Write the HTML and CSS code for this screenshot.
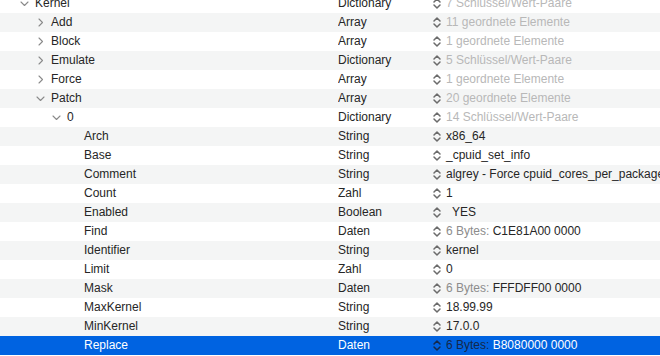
FILE: index.html
```html
<!DOCTYPE html>
<html>
<head>
    <title>Property List</title>
    <meta name="viewport" content="width=device-width, initial-scale=1.0">
    <link rel="stylesheet" href="styles.css">
</head>
<body>
    <svg width="0" height="0" class="defs">
        <defs>
            <symbol id="chev-right" viewBox="0 0 16 19">
                <path d="M6 6 L9.5 9.5 L6 13" fill="none" stroke="currentColor" stroke-width="1.1" stroke-linecap="round" stroke-linejoin="round"/>
            </symbol>
            <symbol id="chev-down" viewBox="0 0 16 19">
                <path d="M4 8 L7.5 11.5 L11 8" fill="none" stroke="currentColor" stroke-width="1.1" stroke-linecap="round" stroke-linejoin="round"/>
            </symbol>
            <symbol id="stepper" viewBox="0 0 16 19">
                <path d="M4 8 L7 5 L10 8 M4 11 L7 14 L10 11" fill="none" stroke="currentColor" stroke-width="1.5" stroke-linecap="round" stroke-linejoin="round"/>
            </symbol>
        </defs>
    </svg>

    <div class="plist">
        <div class="row">
            <div class="key lvl0"><svg class="chev"><use href="#chev-down"/></svg>Kernel</div>
            <div class="type">Dictionary</div>
            <div class="value"><svg class="step"><use href="#stepper"/></svg><span class="muted">7 Schlüssel/Wert-Paare</span></div>
        </div>
        <div class="row">
            <div class="key lvl1"><svg class="chev"><use href="#chev-right"/></svg>Add</div>
            <div class="type">Array</div>
            <div class="value"><svg class="step"><use href="#stepper"/></svg><span class="muted">11 geordnete Elemente</span></div>
        </div>
        <div class="row">
            <div class="key lvl1"><svg class="chev"><use href="#chev-right"/></svg>Block</div>
            <div class="type">Array</div>
            <div class="value"><svg class="step"><use href="#stepper"/></svg><span class="muted">1 geordnete Elemente</span></div>
        </div>
        <div class="row">
            <div class="key lvl1"><svg class="chev"><use href="#chev-right"/></svg>Emulate</div>
            <div class="type">Dictionary</div>
            <div class="value"><svg class="step"><use href="#stepper"/></svg><span class="muted">5 Schlüssel/Wert-Paare</span></div>
        </div>
        <div class="row">
            <div class="key lvl1"><svg class="chev"><use href="#chev-right"/></svg>Force</div>
            <div class="type">Array</div>
            <div class="value"><svg class="step"><use href="#stepper"/></svg><span class="muted">1 geordnete Elemente</span></div>
        </div>
        <div class="row">
            <div class="key lvl1"><svg class="chev"><use href="#chev-down"/></svg>Patch</div>
            <div class="type">Array</div>
            <div class="value"><svg class="step"><use href="#stepper"/></svg><span class="muted">20 geordnete Elemente</span></div>
        </div>
        <div class="row">
            <div class="key lvl2"><svg class="chev"><use href="#chev-down"/></svg>0</div>
            <div class="type">Dictionary</div>
            <div class="value"><svg class="step"><use href="#stepper"/></svg><span class="muted">14 Schlüssel/Wert-Paare</span></div>
        </div>
        <div class="row">
            <div class="key lvl3">Arch</div>
            <div class="type">String</div>
            <div class="value"><svg class="step"><use href="#stepper"/></svg>x86_64</div>
        </div>
        <div class="row">
            <div class="key lvl3">Base</div>
            <div class="type">String</div>
            <div class="value"><svg class="step"><use href="#stepper"/></svg>_cpuid_set_info</div>
        </div>
        <div class="row">
            <div class="key lvl3">Comment</div>
            <div class="type">String</div>
            <div class="value"><svg class="step"><use href="#stepper"/></svg>algrey - Force cpuid_cores_per_package to constant</div>
        </div>
        <div class="row">
            <div class="key lvl3">Count</div>
            <div class="type">Zahl</div>
            <div class="value"><svg class="step"><use href="#stepper"/></svg>1</div>
        </div>
        <div class="row">
            <div class="key lvl3">Enabled</div>
            <div class="type">Boolean</div>
            <div class="value"><svg class="step"><use href="#stepper"/></svg><span class="bool">YES</span></div>
        </div>
        <div class="row">
            <div class="key lvl3">Find</div>
            <div class="type">Daten</div>
            <div class="value"><svg class="step"><use href="#stepper"/></svg><span class="bytes">6 Bytes:</span>&nbsp;C1E81A00 0000</div>
        </div>
        <div class="row">
            <div class="key lvl3">Identifier</div>
            <div class="type">String</div>
            <div class="value"><svg class="step"><use href="#stepper"/></svg>kernel</div>
        </div>
        <div class="row">
            <div class="key lvl3">Limit</div>
            <div class="type">Zahl</div>
            <div class="value"><svg class="step"><use href="#stepper"/></svg>0</div>
        </div>
        <div class="row">
            <div class="key lvl3">Mask</div>
            <div class="type">Daten</div>
            <div class="value"><svg class="step"><use href="#stepper"/></svg><span class="bytes">6 Bytes:</span>&nbsp;FFFDFF00 0000</div>
        </div>
        <div class="row">
            <div class="key lvl3">MaxKernel</div>
            <div class="type">String</div>
            <div class="value"><svg class="step"><use href="#stepper"/></svg>18.99.99</div>
        </div>
        <div class="row">
            <div class="key lvl3">MinKernel</div>
            <div class="type">String</div>
            <div class="value"><svg class="step"><use href="#stepper"/></svg>17.0.0</div>
        </div>
        <div class="row selected">
            <div class="key lvl3">Replace</div>
            <div class="type">Daten</div>
            <div class="value"><svg class="step"><use href="#stepper"/></svg><span class="bytes">6 Bytes:</span>&nbsp;B8080000 0000</div>
        </div>
    </div>
</body>
</html>
```

FILE: styles.css
```css
:root {
    --text-color: #262626;
    --stripe-color: #f4f5f5;
    --muted-color: #b8b8b8;
    --select-color: #0063e1;
    --row-height: 19px;
}

* {
    box-sizing: border-box;
}

body {
    margin: 0;
    background-color: #fff;
    color: var(--text-color);
    font-family: "Liberation Sans", Arial, sans-serif;
    font-size: 12px;
    overflow: hidden;
}

.defs {
    position: absolute;
}

.plist {
    margin-top: -6px;
}

.row {
    display: grid;
    grid-template-columns: 338px 92px 1fr;
    height: var(--row-height);
    line-height: var(--row-height);
    white-space: nowrap;
}

.row:nth-child(even) {
    background-color: var(--stripe-color);
}

.row.selected {
    background-color: var(--select-color);
    color: #fff;
}

.key,
.type,
.value {
    display: flex;
    align-items: center;
    overflow: hidden;
}

.key.lvl0 { padding-left: 17px; }
.key.lvl1 { padding-left: 33px; }
.key.lvl2 { padding-left: 49px; }
.key.lvl3 { padding-left: 84px; }

.chev {
    width: 16px;
    height: 19px;
    flex: none;
    color: #8a8a8a;
    margin-right: 2px;
}

.step {
    width: 16px;
    height: 19px;
    flex: none;
    color: #6b6b6b;
}

.value {
    padding-left: 0;
}

.muted {
    color: var(--muted-color);
}

.bytes {
    color: #8c8c8c;
}

.bool {
    padding-left: 6px;
}

.selected .step,
.selected .bytes {
    color: #14284a;
}
```
